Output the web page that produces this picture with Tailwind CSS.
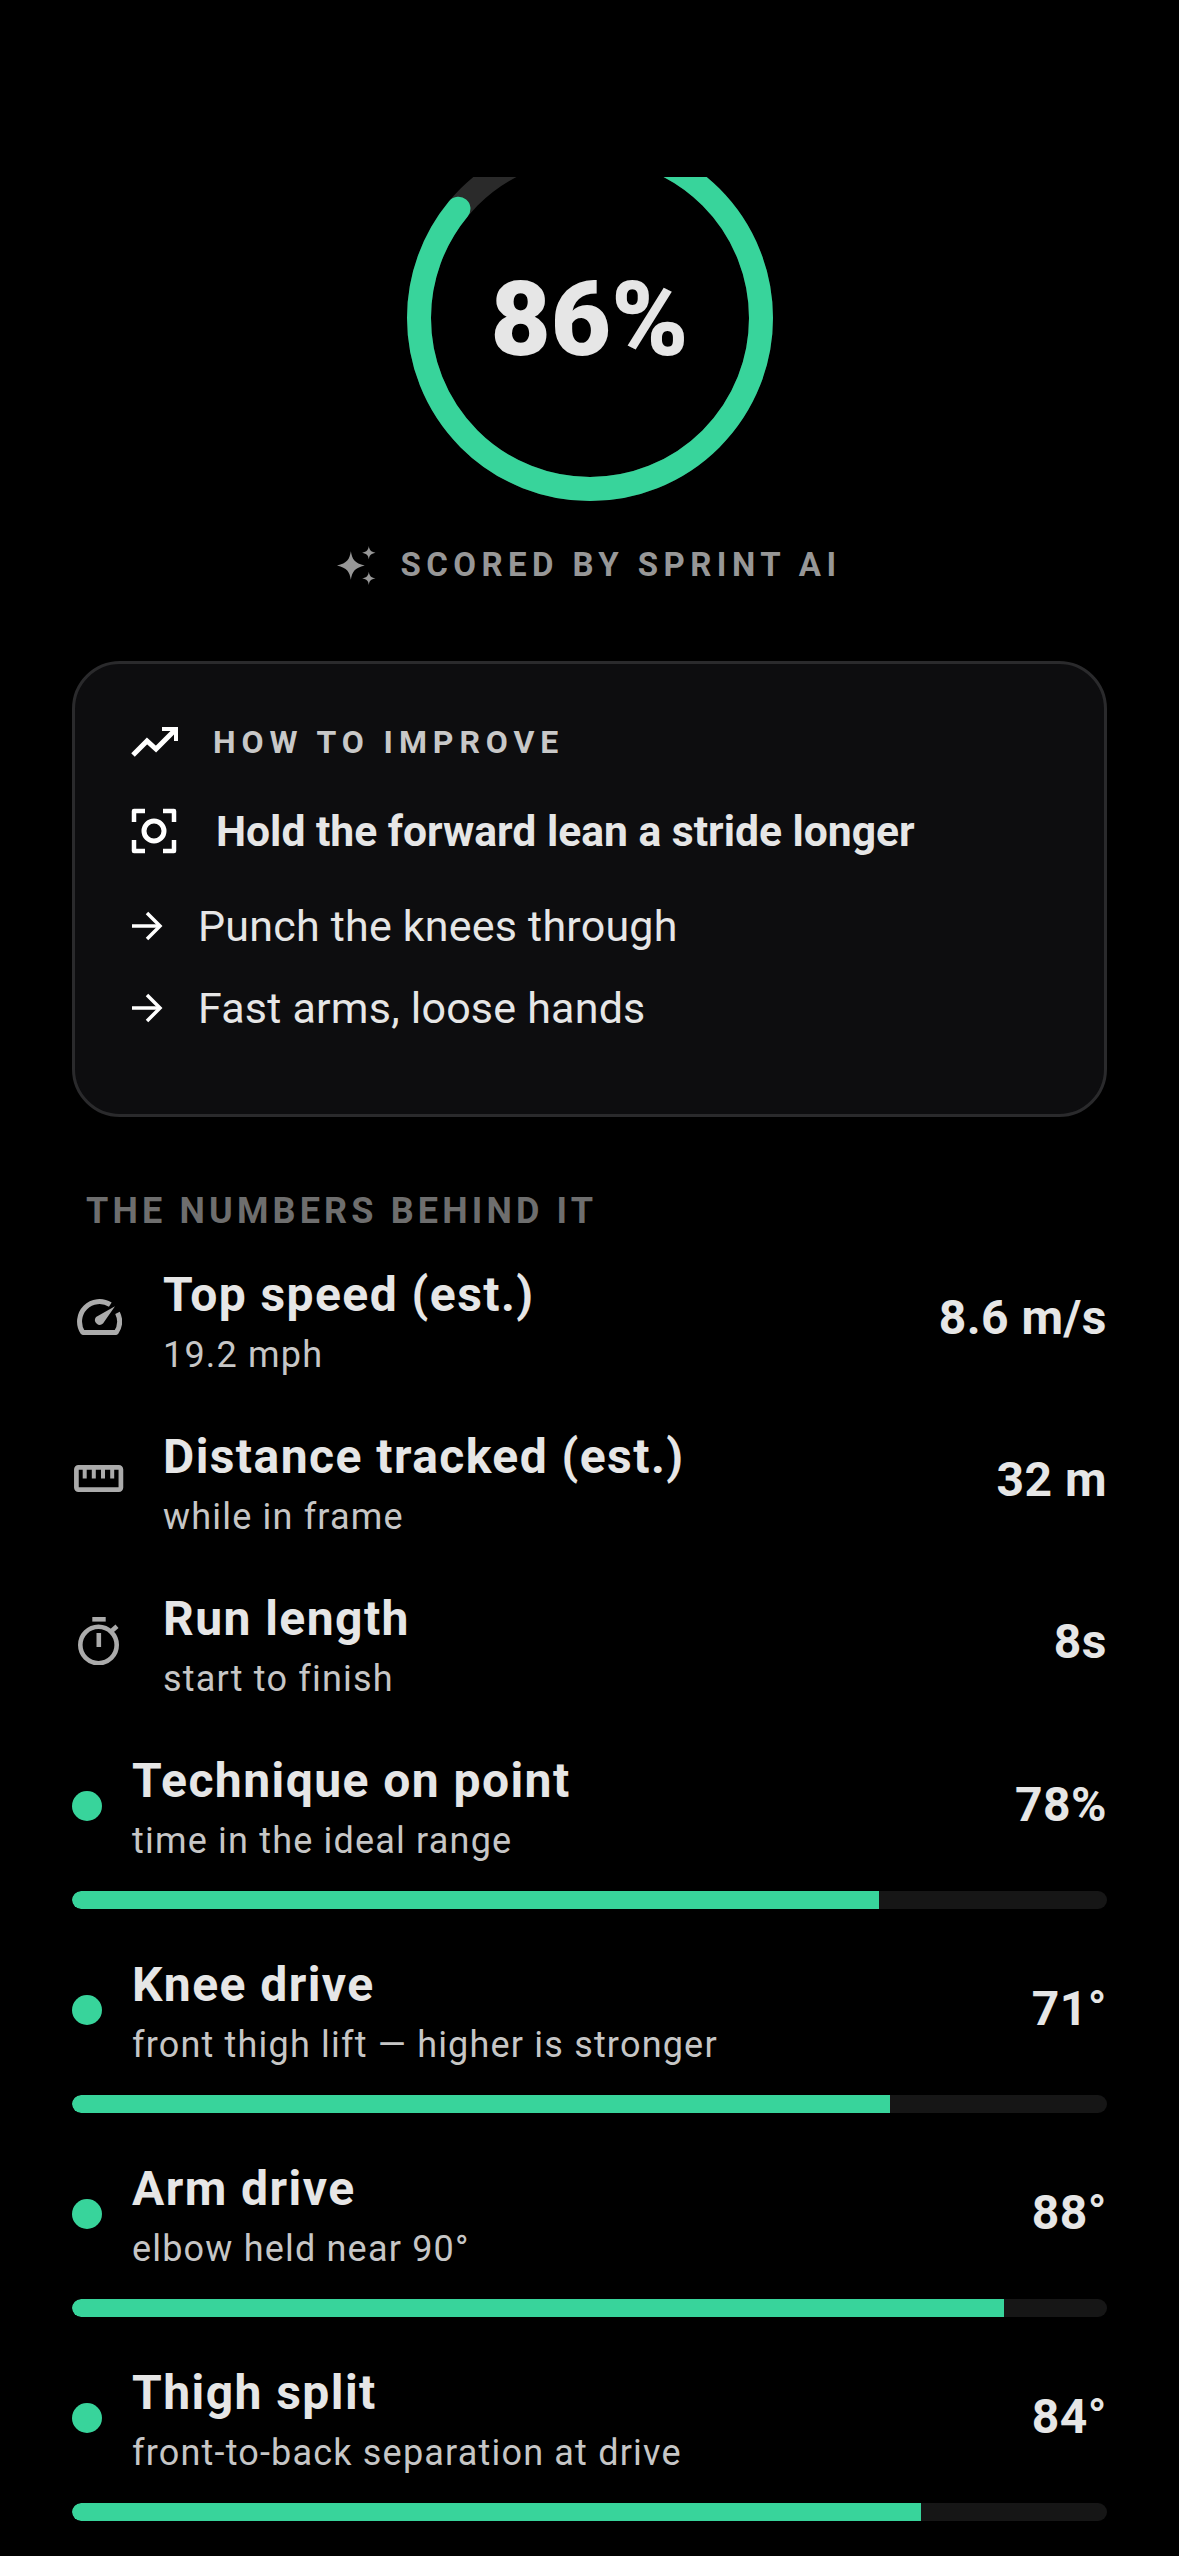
<!DOCTYPE html>
<html lang="en">
<head>
  <meta charset="UTF-8" />
  <title>Sprint score</title>
  <script src="https://cdn.jsdelivr.net/npm/@tailwindcss/browser@4"></script>
</head>
<body class="bg-black font-['Roboto',sans-serif] text-[#e6e6e6]">
<div class="w-[1179px] h-[2556px] overflow-hidden bg-black">

  <!-- Score ring -->
  <section class="pt-[177px] flex flex-col items-center">
    <div class="relative w-[366px] h-[324px] overflow-hidden">
      <svg width="366" height="324" viewBox="0 42 366 324" fill="none">
        <circle cx="183" cy="183" r="171" stroke="#2a2a2a" stroke-width="24"/>
        <circle cx="183" cy="183" r="171" stroke="#38d49b" stroke-width="24" stroke-linecap="round" stroke-dasharray="924 1074.4" transform="rotate(-90 183 183)"/>
      </svg>
      <div class="absolute left-0 right-0 top-[82px] text-center text-[104px] leading-[122px] font-black">86%</div>
    </div>
    <div class="mt-[44px] h-[40px] flex items-center gap-[24px] text-[#979797]">
      <svg width="39" height="39" viewBox="0 0 38 38" fill="currentColor">
        <path d="M13.500 5 C14.800 13 17 16.500 27 19 C17 21.500 14.800 25 13.500 33 C12.200 25 10 21.500 0 19 C10 16.500 12.200 13 13.500 5Z"/>
        <path d="M31 0 C31.600 4 32.800 5.400 37.500 6.500 C32.800 7.600 31.600 9 31 13 C30.400 9 29.200 7.600 24.500 6.500 C29.200 5.400 30.400 4 31 0Z"/>
        <path d="M31 25 C31.600 29 32.800 30.400 37.500 31.500 C32.800 32.600 31.600 34 31 38 C30.400 34 29.200 32.600 24.500 31.500 C29.200 30.400 30.400 29 31 25Z"/>
      </svg>
      <span class="text-[33px] font-bold tracking-[0.165em]">SCORED BY SPRINT AI</span>
    </div>
  </section>

  <!-- How to improve -->
  <section class="mx-[72px] mt-[76px] h-[456px] rounded-[48px] border-[3px] border-[#2a2a2c] bg-[#0d0d0f] pt-[56px] pl-[56px]">
    <div class="flex items-center h-[44px] gap-[34px]">
      <svg width="48" height="32" viewBox="0 0 48 32" fill="none" stroke="#fff" stroke-width="5">
        <path d="M2 29 L16 15 L25 23 L43 5"/>
        <path d="M31 3 H45 V15" stroke-width="4"/>
      </svg>
      <span class="text-[32px] font-bold tracking-[0.185em] text-[#c8c8c8]">HOW TO IMPROVE</span>
    </div>
    <div class="flex items-center h-[60px] mt-[37px] gap-[39px]">
      <svg width="46" height="46" viewBox="0 0 46 46" fill="none" stroke="#fff" stroke-width="4.500" stroke-linejoin="round">
        <path d="M14 3 H3 V14"/><path d="M32 3 H43 V14"/><path d="M3 32 V43 H14"/><path d="M43 32 V43 H32"/>
        <circle cx="23" cy="23" r="10" stroke-width="5"/>
      </svg>
      <span class="text-[42.6px] font-bold leading-[60px] text-[#e6e6e6]">Hold the forward lean a stride longer</span>
    </div>
    <div class="flex items-center h-[50px] mt-[40px] gap-[35px] text-[43px] tracking-[0.005em]">
      <svg width="32" height="30" viewBox="0 0 32 30" fill="none" stroke="#fff" stroke-width="3.500"><path d="M1 15 H29"/><path d="M16 2 L29 15 L16 28"/></svg>
      <span>Punch the knees through</span>
    </div>
    <div class="flex items-center h-[50px] mt-[32px] gap-[35px] text-[43px] tracking-[0.005em]">
      <svg width="32" height="30" viewBox="0 0 32 30" fill="none" stroke="#fff" stroke-width="3.500"><path d="M1 15 H29"/><path d="M16 2 L29 15 L16 28"/></svg>
      <span>Fast arms, loose hands</span>
    </div>
  </section>

  <!-- Metrics -->
  <section class="mx-[72px] mt-[72px]">
    <h2 class="pl-[14px] text-[36px] leading-[44px] font-bold tracking-[0.115em] text-[#6e6e6e]">THE NUMBERS BEHIND IT</h2>

    <div class="mt-[7px] flex flex-col">
      <!-- Top speed -->
      <div class="flex items-center h-[162px]">
        <div class="w-[91px] pl-[5px] mb-[9px] text-[#ababab]">
          <svg width="45" height="36" viewBox="0 0 45 36" fill="none" stroke="currentColor" stroke-width="5" stroke-linejoin="round">
            <path d="M33.300 5.700 A20 20 0 0 0 5.800 33.500 H39.200 A20 20 0 0 0 40.500 13.800"/>
            <path d="M19 18 L38 7.300 L26 24.500 A4.800 4.800 0 0 1 19 18Z" fill="currentColor" stroke="none"/>
          </svg>
        </div>
        <div class="flex-1">
          <div class="text-[48px] leading-[60px] font-bold tracking-[0.03em]">Top speed (est.)</div>
          <div class="text-[36px] leading-[46px] mt-[7px] text-[#c6c6c6] tracking-[0.033em]">19.2 mph</div>
        </div>
        <div class="text-[48px] mb-[6px] font-bold tracking-[0.01em]">8.6 m/s</div>
      </div>
      <!-- Distance -->
      <div class="flex items-center h-[162px]">
        <div class="w-[91px] pl-[2px] mb-[9px] text-[#ababab]">
          <svg width="50" height="27" viewBox="0 0 50 27" fill="none" stroke="currentColor" stroke-width="4.700" stroke-linejoin="round">
            <rect x="2.400" y="2.400" width="44.500" height="22.200" rx="2"/>
            <path d="M10.700 3 V13.500 M19.800 3 V13.500 M29 3 V13.500 M38.200 3 V13.500" stroke-width="4"/>
          </svg>
        </div>
        <div class="flex-1">
          <div class="text-[48px] leading-[60px] font-bold tracking-[0.03em]">Distance tracked (est.)</div>
          <div class="text-[36px] leading-[46px] mt-[7px] text-[#c6c6c6] tracking-[0.033em]">while in frame</div>
        </div>
        <div class="text-[48px] mb-[6px] font-bold tracking-[0.01em]">32 m</div>
      </div>
      <!-- Run length -->
      <div class="flex items-center h-[162px]">
        <div class="w-[91px] pl-[6px] mb-[9px] text-[#ababab]">
          <svg width="42" height="48" viewBox="0 0 42 48" fill="none" stroke="currentColor" stroke-width="4.600">
            <path d="M14.300 2.300 H27.700"/>
            <circle cx="20.500" cy="28" r="18.200"/>
            <path d="M20.800 16 V30"/>
            <path d="M33.300 14.300 L39 9.300"/>
          </svg>
        </div>
        <div class="flex-1">
          <div class="text-[48px] leading-[60px] font-bold tracking-[0.03em]">Run length</div>
          <div class="text-[36px] leading-[46px] mt-[7px] text-[#c6c6c6] tracking-[0.033em]">start to finish</div>
        </div>
        <div class="text-[48px] mb-[6px] font-bold tracking-[0.01em]">8s</div>
      </div>

      <!-- Technique -->
      <div class="pt-[25px] h-[204px]">
        <div class="flex items-center">
          <span class="w-[30px] h-[30px] rounded-full bg-[#38d49b] mr-[30px] mb-[4px]"></span>
          <div class="flex-1">
            <div class="text-[48px] leading-[60px] font-bold tracking-[0.03em]">Technique on point</div>
            <div class="text-[36px] leading-[46px] mt-[7px] text-[#c6c6c6] tracking-[0.033em]">time in the ideal range</div>
          </div>
          <div class="text-[48px] mb-[6px] font-bold tracking-[0.01em]">78%</div>
        </div>
        <div class="mt-[27px] h-[18px] rounded-full bg-[#161616] overflow-hidden"><div class="h-full rounded-l-full bg-[#38d49b]" style="width:78%"></div></div>
      </div>
      <!-- Knee drive -->
      <div class="pt-[25px] h-[204px]">
        <div class="flex items-center">
          <span class="w-[30px] h-[30px] rounded-full bg-[#38d49b] mr-[30px] mb-[4px]"></span>
          <div class="flex-1">
            <div class="text-[48px] leading-[60px] font-bold tracking-[0.03em]">Knee drive</div>
            <div class="text-[36px] leading-[46px] mt-[7px] text-[#c6c6c6] tracking-[0.033em]">front thigh lift — higher is stronger</div>
          </div>
          <div class="text-[48px] mb-[6px] font-bold tracking-[0.01em]">71°</div>
        </div>
        <div class="mt-[27px] h-[18px] rounded-full bg-[#161616] overflow-hidden"><div class="h-full rounded-l-full bg-[#38d49b]" style="width:79%"></div></div>
      </div>
      <!-- Arm drive -->
      <div class="pt-[25px] h-[204px]">
        <div class="flex items-center">
          <span class="w-[30px] h-[30px] rounded-full bg-[#38d49b] mr-[30px] mb-[4px]"></span>
          <div class="flex-1">
            <div class="text-[48px] leading-[60px] font-bold tracking-[0.03em]">Arm drive</div>
            <div class="text-[36px] leading-[46px] mt-[7px] text-[#c6c6c6] tracking-[0.033em]">elbow held near 90°</div>
          </div>
          <div class="text-[48px] mb-[6px] font-bold tracking-[0.01em]">88°</div>
        </div>
        <div class="mt-[27px] h-[18px] rounded-full bg-[#161616] overflow-hidden"><div class="h-full rounded-l-full bg-[#38d49b]" style="width:90%"></div></div>
      </div>
      <!-- Thigh split -->
      <div class="pt-[25px] h-[204px]">
        <div class="flex items-center">
          <span class="w-[30px] h-[30px] rounded-full bg-[#38d49b] mr-[30px] mb-[4px]"></span>
          <div class="flex-1">
            <div class="text-[48px] leading-[60px] font-bold tracking-[0.03em]">Thigh split</div>
            <div class="text-[36px] leading-[46px] mt-[7px] text-[#c6c6c6] tracking-[0.033em]">front-to-back separation at drive</div>
          </div>
          <div class="text-[48px] mb-[6px] font-bold tracking-[0.01em]">84°</div>
        </div>
        <div class="mt-[27px] h-[18px] rounded-full bg-[#161616] overflow-hidden"><div class="h-full rounded-l-full bg-[#38d49b]" style="width:82%"></div></div>
      </div>
    </div>
  </section>
</div>
</body>
</html>
